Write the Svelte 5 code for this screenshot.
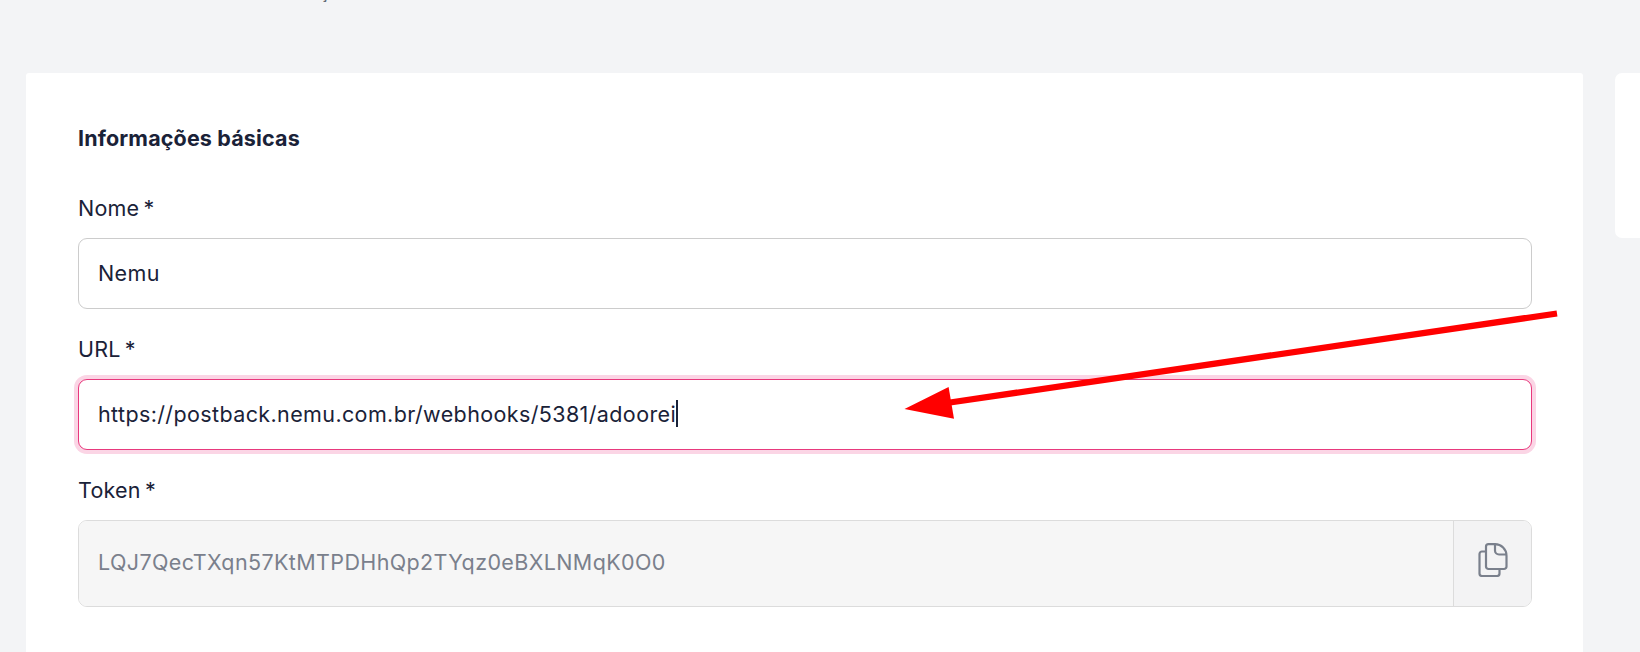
<script lang="ts">
  const token = "LQJ7QecTXqn57KtMTPDHhQp2TYqz0eBXLNMqK0O0";
</script>

<div class="page">
  <p class="subtitle">Insira abaixo os dados do seu serviço.</p>

  <div class="columns">
    <section class="card">
      <h2>Informações básicas</h2>

      <div class="field">
        <div class="label">Nome <span class="star">*</span></div>
        <div class="input">Nemu</div>
      </div>

      <div class="field">
        <div class="label">URL <span class="star">*</span></div>
        <div class="input focus">https://postback.nemu.com.br/webhooks/5381/adoorei<span class="caret"></span></div>
      </div>

      <div class="field">
        <div class="label">Token <span class="star">*</span></div>
        <div class="input-group">
          <div class="token">{token}</div>
          <div class="addon">
            <svg width="30" height="34" viewBox="0 0 30 34" fill="none" stroke="#7a808c" stroke-width="2.2" stroke-linejoin="round" stroke-linecap="round">
              <path d="M8 8.5H4A2.5 2.5 0 0 0 1.5 11v19.5A2.5 2.5 0 0 0 4 33h15a2.5 2.5 0 0 0 2.5-2.5V26" />
              <path d="M10.5 1.2h6.5a11.5 11.5 0 0 1 11.5 11.5V23.5a2.5 2.5 0 0 1-2.5 2.5H10.5A2.5 2.5 0 0 1 8 23.5V3.7a2.5 2.5 0 0 1 2.5-2.5z" />
              <path d="M17 1.5V7.5a4 4 0 0 0 4 4h7" />
            </svg>
          </div>
        </div>
      </div>
    </section>

    <aside class="side"></aside>
  </div>

  <svg class="arrow" width="1640" height="652" viewBox="0 0 1640 652">
    <line x1="1557" y1="313.5" x2="950" y2="402.5" stroke="#ff0000" stroke-width="6.3" />
    <polygon points="904.5,409 948.6,387 954,418.7" fill="#ff0000" />
  </svg>
</div>

<style>
  :global(body) {
    margin: 0;
    background: #f3f4f6;
  }

  .page {
    position: relative;
    height: 652px;
    overflow: hidden;
    font-family: Inter, "Liberation Sans", sans-serif;
    color: #1a2238;
    padding-left: 26px;
    box-sizing: border-box;
  }

  .subtitle {
    margin: -17px 0 0;
    height: 20px;
    font-size: 17px;
    line-height: 20px;
    letter-spacing: 0.3px;
    color: #4b5563;
  }

  .columns {
    display: flex;
    gap: 32px;
    margin-top: 70px;
    align-items: flex-start;
  }

  .card {
    width: 1557px;
    flex: none;
    height: 620px;
    box-sizing: border-box;
    background: #fff;
    padding: 52px 51px 0 52px;
    border-radius: 3px 3px 0 0;
  }

  .side {
    flex: none;
    width: 60px;
    height: 165px;
    background: #fff;
    border-radius: 7px;
  }

  h2 {
    margin: 0 0 44px;
    font-size: 21.5px;
    line-height: 26px;
    letter-spacing: 0.15px;
    font-weight: 700;
  }

  .field {
    margin-bottom: 27px;
  }

  .label {
    font-size: 21.5px;
    line-height: 26px;
    letter-spacing: 0.2px;
    margin-bottom: 17px;
  }

  .star {
    margin-left: -2px;
  }

  .input {
    height: 71px;
    box-sizing: border-box;
    border: 1px solid #cccccc;
    border-radius: 9px;
    padding: 0 19px 2px;
    display: flex;
    align-items: center;
    font-size: 21.5px;
    letter-spacing: 0.38px;
    background: #fff;
  }

  .input.focus {
    border-color: #e8397d;
    box-shadow: 0 0 0 4px #fbd5e5;
  }

  .caret {
    display: inline-block;
    width: 2px;
    height: 27px;
    background: #1a2238;
  }

  .input-group {
    display: flex;
    height: 87px;
    box-sizing: border-box;
    border: 1px solid #dcdcdc;
    border-radius: 9px;
    overflow: hidden;
  }

  .token {
    flex: 1;
    display: flex;
    align-items: center;
    padding: 0 19px 3px;
    font-size: 21.5px;
    letter-spacing: 0.38px;
    color: #7a808c;
    background: #f6f6f6;
  }

  .addon {
    width: 78px;
    box-sizing: border-box;
    padding-bottom: 8px;
    display: flex;
    align-items: center;
    justify-content: center;
    border-left: 1px solid #dcdcdc;
    background: #f3f3f4;
  }

  .arrow {
    position: absolute;
    left: 0;
    top: 0;
    pointer-events: none;
  }
</style>
